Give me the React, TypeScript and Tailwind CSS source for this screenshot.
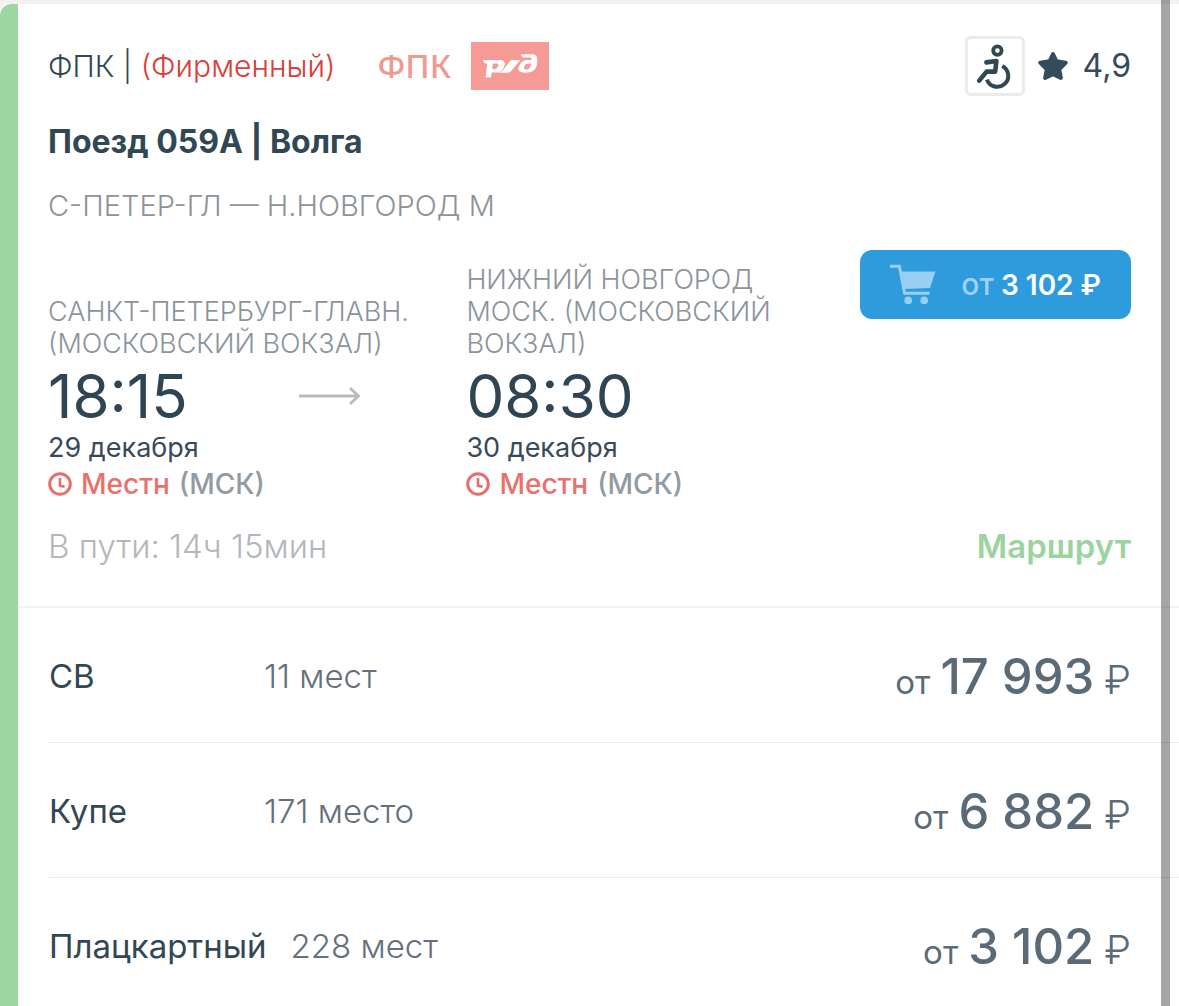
import React from "react";
import clsx from "clsx";

interface Stop {
  station: string;
  time: string;
  date: string;
}

interface SeatClass {
  name: string;
  seats: string;
  price: string;
}

const departure: Stop = {
  station: "САНКТ-ПЕТЕРБУРГ-ГЛАВН. (МОСКОВСКИЙ ВОКЗАЛ)",
  time: "18:15",
  date: "29 декабря",
};

const arrival: Stop = {
  station: "НИЖНИЙ НОВГОРОД МОСК. (МОСКОВСКИЙ ВОКЗАЛ)",
  time: "08:30",
  date: "30 декабря",
};

const seatClasses: SeatClass[] = [
  { name: "СВ", seats: "11 мест", price: "17 993" },
  { name: "Купе", seats: "171 место", price: "6 882" },
  { name: "Плацкартный", seats: "228 мест", price: "3 102" },
];

function WheelchairIcon() {
  return (
    <svg
      viewBox="3 3 54 54"
      className="size-full"
      fill="none"
      stroke="#324754"
      strokeWidth={4.6}
      strokeLinecap="round"
      strokeLinejoin="round"
      aria-hidden="true"
    >
      <circle cx="32.4" cy="14.6" r="4.2" strokeWidth={3.8} />
      <path d="M21.4 26.4 L31.4 25 L30.2 35.6 H21.6 L14.2 44.6" />
      <path
        d="M37.2 30 A11 11 0 1 1 21.9 43.6"
        strokeWidth={4}
        strokeLinecap="butt"
      />
    </svg>
  );
}

function StarIcon() {
  return (
    <svg viewBox="0 0 32 32" className="size-8" aria-hidden="true">
      <path
        d="M16 4 L19.5 11.3 L28.8 12.7 L22.2 19.4 L23.9 28 L16 24.2 L8.1 28 L9.8 19.4 L3.2 12.7 L12.5 11.3 Z"
        fill="#324c5c"
        stroke="#324c5c"
        strokeWidth={4}
        strokeLinejoin="round"
      />
    </svg>
  );
}

function CartIcon() {
  return (
    <svg viewBox="0 0 46 42" className="h-[42px] w-[46px]" aria-hidden="true">
      <path
        d="M0 2.2 H9.4 L14.6 29.2 H39.6"
        fill="none"
        stroke="#98cff2"
        strokeWidth={3}
      />
      <path d="M11 7.4 H45.4 L40 24 L14.2 25 Z" fill="#98cff2" />
      <circle cx="18.2" cy="36.4" r="3.8" fill="#98cff2" />
      <circle cx="34.2" cy="36.4" r="3.8" fill="#98cff2" />
    </svg>
  );
}

function ClockIcon() {
  return (
    <svg
      viewBox="0 0 24 24"
      className="size-6"
      fill="none"
      stroke="#e76e6c"
      strokeWidth={3}
      aria-hidden="true"
    >
      <circle cx="12" cy="12" r="10.3" />
      <path d="M12 6 V13.8 L16.6 14.6" strokeWidth={2.6} />
    </svg>
  );
}

function ArrowIcon() {
  return (
    <svg
      viewBox="0 0 62 20"
      className="h-5 w-[62px]"
      fill="none"
      stroke="#b9bcbf"
      strokeWidth={3}
      aria-hidden="true"
    >
      <path d="M0 10 H59" />
      <path d="M51 2 L59.4 10 L51 18" />
    </svg>
  );
}

function RailwaysLogo() {
  return (
    <svg
      viewBox="0 0 78 48"
      className="h-12 w-[78px]"
      role="img"
      aria-label="РЖД"
    >
      <rect width="78" height="48" fill="#f59a95" />
      <path
        d="M12 18 H28.5 C33.5 18 34.6 21 33.4 24 C32 28 29 30.6 25 30.6 H20.6 L20 35.4 H14.6 L16.2 21.4 H14.6 C13.2 21 12.2 19.8 12 18 Z M21.8 21.4 L21.2 27 H23.6 C27 27 28.8 21.4 26 21.4 Z"
        fill="#fff"
        fillRule="evenodd"
      />
      <path
        d="M25.6 30.8 C29 30.4 31.2 28.8 33.2 26.4 L38.2 20.2 C39.4 18.6 40.4 18 42.4 18 H49.4 L40.6 28.6 C39.2 30.2 38.2 30.8 36.2 30.8 Z"
        fill="#fff"
      />
      <path
        d="M50 12.2 H60.5 C65 12.2 66.2 14 66.2 17.6 V20 C66.2 27 62 30.8 54.6 30.8 C47.6 30.8 46 28 48.4 23.6 C50 20 52.6 18 56.4 18 H60.4 C60.8 16.4 60.4 15.6 58.8 15.6 H52.6 C51 15.2 50.2 14 50 12.2 Z M60.2 21.4 H57.4 C55.2 21.4 54 22.4 53.2 24.6 C52.4 26.6 53.2 27.4 54.8 27.4 C58.2 27.4 60 25.2 60.2 21.4 Z"
        fill="#fff"
        fillRule="evenodd"
      />
    </svg>
  );
}

function StopInfo({ stop, withArrow }: { stop: Stop; withArrow?: boolean }) {
  return (
    <div className="pt-3.5">
      <p className="pr-8 text-[27px] leading-8 font-light text-[#8b949b]">
        {stop.station}
      </p>
      <div className="flex items-center">
        <time
          className={clsx(
            "text-[60px] leading-[72px] text-[#2f4553]",
            withArrow && "w-3/5",
          )}
        >
          {stop.time}
        </time>
        {withArrow && <ArrowIcon />}
      </div>
      <p className="text-[27px] leading-8 text-[#384a57]">{stop.date}</p>
      <p className="flex items-center gap-[9px] pt-0.5 text-[28px] leading-9">
        <ClockIcon />
        <span className="font-medium text-[#e9716b]">Местн</span>
        <span className="font-medium text-[#929ba2]">(МСК)</span>
      </p>
    </div>
  );
}

function SeatClassRow({ name, seats, price }: SeatClass) {
  return (
    <li className="ml-[31px] flex h-[135px] items-center border-b border-[#ebebeb] pt-1 pr-12 text-[33px]">
      <span className="min-w-[191px] text-[#324754]">{name}</span>
      <span className="ml-6 font-light text-[#65707a]">{seats}</span>
      <span className="ml-auto flex items-baseline gap-2.5 text-[#5a6b77]">
        <span>от</span>
        <span className="text-[49px] font-medium">{price}</span>
        <span className="text-[40px] font-light">₽</span>
      </span>
    </li>
  );
}

export default function App() {
  return (
    <main className="relative h-screen overflow-hidden bg-[#f2f2f2] pt-1 font-['Inter','Liberation_Sans',sans-serif]">
      <article className="flex min-h-full overflow-hidden rounded-tl-xl bg-white">
        <div className="w-[18px] shrink-0 bg-[#9dd6a1]" />
        <div className="min-w-0 flex-1">
          <section className="border-b-2 border-[#f3f3f3] pt-8 pr-12 pb-10 pl-[30px]">
            <header className="flex h-[60px] items-center">
              <p className="text-[30px] font-light text-[#324754]">
                ФПК | <span className="text-[#d8403a]">(Фирменный)</span>
              </p>
              <span className="ml-[42px] font-['Noto_Sans',sans-serif] text-[33px] font-medium text-[#f2998f]">
                ФПК
              </span>
              <div className="ml-5">
                <RailwaysLogo />
              </div>
              <div
                className="ml-auto size-[60px] rounded-md border-3 border-[#eaebec]"
                role="img"
                aria-label="Места для инвалидов"
              >
                <WheelchairIcon />
              </div>
              <div className="ml-3 flex items-center gap-3.5">
                <StarIcon />
                <span className="text-[32px] text-[#38495a]">4,9</span>
              </div>
            </header>

            <h1 className="mt-[26px] text-[32px] leading-10 font-bold text-[#324754]">
              Поезд 059А | Волга
            </h1>
            <p className="mt-6 text-[29px] leading-10 font-light text-[#8e9398]">
              С-ПЕТЕР-ГЛ — Н.НОВГОРОД М
            </p>

            <div className="mt-6 grid grid-cols-[418fr_393fr_271fr] items-end">
              <StopInfo stop={departure} withArrow />
              <StopInfo stop={arrival} />
              <button
                type="button"
                className="flex h-[69px] items-center justify-between self-start rounded-xl bg-[#2d9bdc] px-[30px] text-[28px] font-semibold text-white"
              >
                <CartIcon />
                <span>
                  <span className="text-[30px] font-medium text-[#9bd2f5]">
                    от
                  </span>{" "}
                  3 102 ₽
                </span>
              </button>
            </div>

            <div className="mt-6 flex items-center justify-between text-[33px] leading-10">
              <p className="font-light text-[#b3b7bb]">В пути: 14ч 15мин</p>
              <a href="#route" className="font-semibold text-[#9bd49f]">
                Маршрут
              </a>
            </div>
          </section>

          <ul>
            {seatClasses.map((seatClass) => (
              <SeatClassRow key={seatClass.name} {...seatClass} />
            ))}
          </ul>
        </div>
      </article>

      {/* scroll thumb, drawn over the card */}
      <div className="absolute inset-y-0 right-[9px] w-[9px] bg-black/35" />
    </main>
  );
}
